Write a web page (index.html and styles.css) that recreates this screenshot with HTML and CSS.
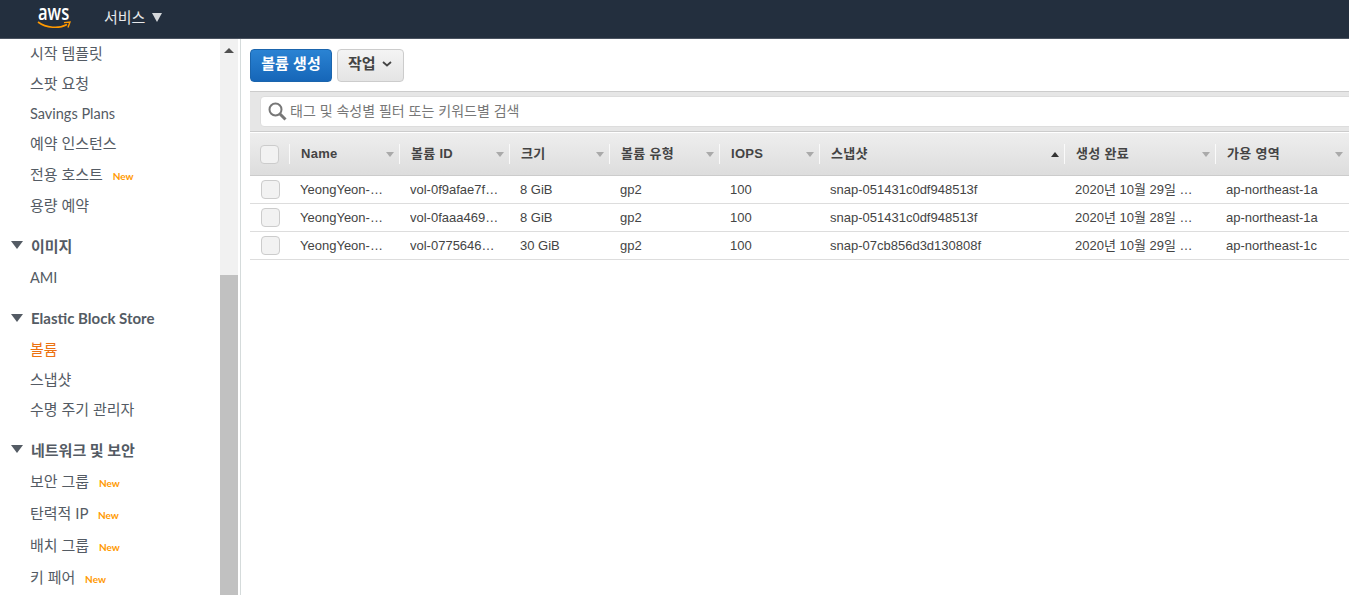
FILE: index.html
```html
<!DOCTYPE html>
<html lang="ko">
<head>
    <meta charset="utf-8">
    <title>볼륨 | EC2 Management Console</title>
    <link rel="stylesheet" href="styles.css">
</head>
<body>
    <header class="topbar">
        <div class="logo">
            <span class="logo-text">aws</span>
            <svg class="logo-smile" width="34" height="9" viewBox="0 0 34 9">
                <path d="M1 1 C9 7 22 8 30 3.5" fill="none" stroke="#f90" stroke-width="1.6"/>
                <path d="M27 1.6 L33 1 L31 6.4" fill="none" stroke="#f90" stroke-width="1.4"/>
            </svg>
        </div>
        <div class="services">서비스 <span class="services-caret"></span></div>
    </header>

    <div class="layout">
        <nav class="sidebar">
            <ul class="nav-list">
                <li class="nav-item">시작 템플릿</li>
                <li class="nav-item">스팟 요청</li>
                <li class="nav-item nav-latin">Savings Plans</li>
                <li class="nav-item">예약 인스턴스</li>
                <li class="nav-item nav-item-new">전용 호스트 <span class="badge">New</span></li>
                <li class="nav-item">용량 예약</li>
            </ul>
            <h3 class="nav-head"><span class="nav-caret"></span>이미지</h3>
            <ul class="nav-list">
                <li class="nav-item nav-latin nav-ami">AMI</li>
            </ul>
            <h3 class="nav-head"><span class="nav-caret"></span>Elastic Block Store</h3>
            <ul class="nav-list">
                <li class="nav-item active">볼륨</li>
                <li class="nav-item">스냅샷</li>
                <li class="nav-item">수명 주기 관리자</li>
            </ul>
            <h3 class="nav-head"><span class="nav-caret"></span>네트워크 및 보안</h3>
            <ul class="nav-list">
                <li class="nav-item nav-item-new">보안 그룹 <span class="badge">New</span></li>
                <li class="nav-item nav-item-new">탄력적 IP <span class="badge">New</span></li>
                <li class="nav-item nav-item-new">배치 그룹 <span class="badge">New</span></li>
                <li class="nav-item nav-item-new">키 페어 <span class="badge">New</span></li>
            </ul>
        </nav>

        <div class="scrollbar">
            <div class="scroll-track"><span class="scroll-up"></span></div>
            <div class="scroll-thumb"></div>
        </div>

        <main class="content">
            <div class="toolbar">
                <button class="btn btn-primary">볼륨 생성</button>
                <button class="btn">작업
                    <svg class="btn-chevron" width="10" height="6" viewBox="0 0 10 6">
                        <path d="M1 1 L5 4.5 L9 1" fill="none" stroke="#444" stroke-width="1.8"/>
                    </svg>
                </button>
            </div>

            <div class="search-band">
                <div class="search-box">
                    <svg class="search-icon" width="19" height="19" viewBox="0 0 19 19">
                        <circle cx="7.5" cy="7.5" r="6" fill="none" stroke="#777" stroke-width="2"/>
                        <path d="M12 12 L17.5 17.5" stroke="#777" stroke-width="3"/>
                    </svg>
                    <span class="search-text">태그 및 속성별 필터 또는 키워드별 검색</span>
                </div>
            </div>

            <table class="volumes">
                <colgroup>
                    <col class="col-check">
                    <col class="col-name">
                    <col class="col-id">
                    <col class="col-size">
                    <col class="col-type">
                    <col class="col-iops">
                    <col class="col-snap">
                    <col class="col-date">
                    <col class="col-zone">
                </colgroup>
                <thead>
                    <tr>
                        <th><span class="check"></span></th>
                        <th><div class="th-in">Name<span class="sort"></span></div></th>
                        <th><div class="th-in">볼륨 ID<span class="sort"></span></div></th>
                        <th><div class="th-in">크기<span class="sort"></span></div></th>
                        <th><div class="th-in">볼륨 유형<span class="sort"></span></div></th>
                        <th><div class="th-in">IOPS<span class="sort"></span></div></th>
                        <th><div class="th-in">스냅샷<span class="sort sort-up"></span></div></th>
                        <th><div class="th-in">생성 완료<span class="sort"></span></div></th>
                        <th><div class="th-in">가용 영역<span class="sort"></span></div></th>
                    </tr>
                </thead>
                <tbody>
                    <tr>
                        <td><span class="check row-check"></span></td>
                        <td><div class="cell">YeongYeon-Web-1</div></td>
                        <td><div class="cell">vol-0f9afae7f2c14d3a1</div></td>
                        <td><div class="cell">8 GiB</div></td>
                        <td><div class="cell">gp2</div></td>
                        <td><div class="cell">100</div></td>
                        <td><div class="cell">snap-051431c0df948513f</div></td>
                        <td class="date"><div class="cell">2020년 10월 29일 오전 10:12:33</div></td>
                        <td><div class="cell">ap-northeast-1a</div></td>
                    </tr>
                    <tr>
                        <td><span class="check row-check"></span></td>
                        <td><div class="cell">YeongYeon-Web-2</div></td>
                        <td><div class="cell">vol-0faaa469b71e20c55</div></td>
                        <td><div class="cell">8 GiB</div></td>
                        <td><div class="cell">gp2</div></td>
                        <td><div class="cell">100</div></td>
                        <td><div class="cell">snap-051431c0df948513f</div></td>
                        <td class="date"><div class="cell">2020년 10월 28일 오후 03:40:18</div></td>
                        <td><div class="cell">ap-northeast-1a</div></td>
                    </tr>
                    <tr>
                        <td><span class="check row-check"></span></td>
                        <td><div class="cell">YeongYeon-Web-3</div></td>
                        <td><div class="cell">vol-07756466a09e3b1d7</div></td>
                        <td><div class="cell">30 GiB</div></td>
                        <td><div class="cell">gp2</div></td>
                        <td><div class="cell">100</div></td>
                        <td><div class="cell">snap-07cb856d3d130808f</div></td>
                        <td class="date"><div class="cell">2020년 10월 29일 오전 11:05:47</div></td>
                        <td><div class="cell">ap-northeast-1c</div></td>
                    </tr>
                </tbody>
            </table>
        </main>
    </div>
</body>
</html>
```

FILE: styles.css
```css
html, body {
    margin: 0;
    height: 100%;
    overflow: hidden;
}
body {
    font-family: "Liberation Sans", "Noto Sans CJK KR", sans-serif;
    font-size: 13px;
    color: #444;
    background-color: #fff;
}
.topbar {
    height: 38px;
    display: flex;
    align-items: center;
    background-color: #232f3e;
    border-bottom: 1px solid #4a5360;
}
.logo {
    width: 34px;
    margin-left: 37px;
    position: relative;
    height: 30px;
}
.logo-text {
    display: block;
    width: 40px;
    margin: -1px 0 0 1px;
    font-family: "Open Sans", sans-serif;
    font-size: 21px;
    font-weight: 600;
    line-height: 18px;
    color: #fff;
    transform: scaleX(0.79);
    transform-origin: left center;
}
.logo-smile {
    position: absolute;
    left: 0;
    top: 17px;
}
.services {
    margin-left: 33px;
    margin-bottom: 3px;
    font-size: 15px;
    line-height: 20px;
    color: #e6e8ea;
    display: flex;
    align-items: center;
    gap: 7px;
}
.services-caret {
    width: 0;
    height: 0;
    border-left: 5.5px solid transparent;
    border-right: 5.5px solid transparent;
    border-top: 9px solid #d5d8db;
}
.layout {
    display: flex;
    height: 556px;
}
.sidebar {
    width: 220px;
    flex: none;
    overflow: hidden;
    margin-top: -1px;
    font-family: Lato, "Noto Sans CJK KR", sans-serif;
    font-size: 15px;
    color: #545b64;
}
.nav-list {
    list-style: none;
    margin: 0;
    padding: 0;
}
.nav-item {
    height: 30px;
    line-height: 30px;
    padding-left: 30px;
}
.nav-item-new {
    height: 32px;
    line-height: 32px;
}
.nav-latin {
    font-size: 14.5px;
    line-height: 32px;
}
.nav-ami {
    height: 32px;
    line-height: 34px;
}
.nav-item.active {
    color: #ec7211;
}
.badge {
    margin-left: 6px;
    font-size: 10px;
    font-weight: 700;
    color: #ff9900;
}
.nav-head {
    display: flex;
    align-items: center;
    margin: 10px 0 1px;
    height: 30px;
    font-size: 15px;
    font-weight: 700;
    color: #545b64;
}
.nav-caret {
    width: 0;
    height: 0;
    margin: 0 8px 0 11px;
    border-left: 6px solid transparent;
    border-right: 6px solid transparent;
    border-top: 8px solid #545b64;
}
.scrollbar {
    width: 18px;
    flex: none;
    display: flex;
    flex-direction: column;
    background-color: #f1f1f1;
}
.scroll-track {
    height: 236px;
    display: flex;
    justify-content: center;
    padding-top: 9px;
    box-sizing: border-box;
}
.scroll-up {
    width: 0;
    height: 0;
    border-left: 5px solid transparent;
    border-right: 5px solid transparent;
    border-bottom: 5px solid #505050;
}
.scroll-thumb {
    flex: 1;
    background-color: #c1c1c1;
}
.content {
    flex: 1;
    min-width: 0;
    margin-left: 2px;
    padding-left: 9px;
    border-left: 1px solid #d5dbdb;
    overflow: hidden;
}
.toolbar {
    display: flex;
    gap: 5px;
    height: 33px;
    margin-top: 10px;
}
.btn {
    height: 33px;
    padding: 0 11px 3px 10px;
    display: flex;
    align-items: center;
    gap: 6px;
    font-family: inherit;
    font-size: 15px;
    font-weight: 700;
    line-height: 20px;
    color: #444;
    background: linear-gradient(#f4f4f4, #e4e4e4);
    border: 1px solid #ccc;
    border-radius: 4px;
}
.btn-primary {
    width: 82px;
    justify-content: center;
    padding: 0 0 3px;
    color: #fff;
    background: linear-gradient(#2a83d3, #1666b8);
    border-color: #1b65ad;
}
.search-band {
    margin-top: 9px;
    height: 41px;
    box-sizing: border-box;
    padding: 4px 0 5px 10px;
    background-color: #e6e6e6;
    border-top: 1px solid #ccc;
    border-bottom: 1px solid #ccc;
}
.search-box {
    height: 29px;
    margin-right: -6px;
    padding-left: 7px;
    display: flex;
    align-items: center;
    gap: 3px;
    background-color: #fff;
    border: 1px solid #ddd;
    border-radius: 4px;
    color: #777;
    font-size: 14px;
    line-height: 18px;
}
.search-text {
    margin-bottom: 2px;
}
.volumes {
    width: 1099px;
    margin-top: 1px;
    table-layout: fixed;
    border-collapse: collapse;
}
.col-check { width: 40px; }
.col-name { width: 110px; }
.col-id { width: 110px; }
.col-size { width: 100px; }
.col-type { width: 110px; }
.col-iops { width: 100px; }
.col-snap { width: 245px; }
.col-date { width: 151px; }
.col-zone { width: 133px; }
.volumes th {
    height: 42px;
    padding: 1px 0 0 10px;
    text-align: left;
    font-size: 13px;
    font-weight: 700;
    letter-spacing: 0.3px;
    color: #444;
    background: linear-gradient(#eee, #ddd);
    border-bottom: 1px solid #ccc;
    box-sizing: border-box;
}
.th-in {
    position: relative;
    height: 20px;
    line-height: 20px;
    margin-left: -11px;
    padding-left: 11px;
    border-left: 1px solid #fafafa;
}
.sort {
    position: absolute;
    right: 6px;
    top: 8px;
    width: 0;
    height: 0;
    border-left: 4px solid transparent;
    border-right: 4px solid transparent;
    border-top: 5px solid #aaa;
}
.sort-up {
    border-top: 0;
    border-bottom: 5px solid #333;
}
.volumes td {
    height: 28px;
    padding: 2px 11px 0 10px;
    box-sizing: border-box;
    color: #444;
    border-bottom: 1px solid #ddd;
}
.volumes td.date {
    padding-right: 13px;
}
.cell {
    font-size: 13px;
    line-height: 18px;
    white-space: nowrap;
    overflow: hidden;
    text-overflow: ellipsis;
}
.check {
    display: block;
    width: 17px;
    height: 17px;
    background-color: #f2f2f2;
    border: 1px solid #ccc;
    border-radius: 4px;
}
.row-check {
    margin: -2px 0 0 1px;
}
```
